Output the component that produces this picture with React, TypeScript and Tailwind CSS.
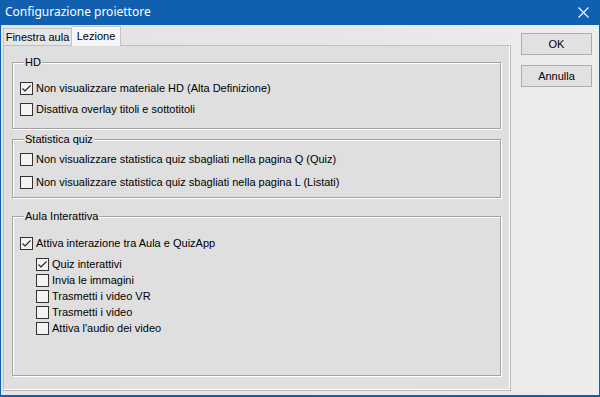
import React from "react";

function Check({ checked }: { checked?: boolean }) {
  return (
    <span className="w-[13px] h-[13px] border border-[#333333] bg-[#f3f3f3] flex items-center justify-center shrink-0">
      {checked && (
        <svg width="11" height="11" viewBox="0 0 11 11">
          <polyline points="1.5,5.5 4,8 9.5,2.5" fill="none" stroke="#222" strokeWidth="1.1" />
        </svg>
      )}
    </span>
  );
}

function Row({ label, checked, className }: { label: string; checked?: boolean; className?: string }) {
  return (
    <div className={"flex items-center gap-[3px] h-[13px] " + (className ?? "")}>
      <Check checked={checked} />
      <span className="leading-[13px] whitespace-nowrap">{label}</span>
    </div>
  );
}

function Group({ title, className, children }: { title: string; className?: string; children: React.ReactNode }) {
  return (
    <fieldset
      className={
        "border border-[#a3a3a3] shadow-[inset_1px_1px_0_#ffffff,1px_1px_0_#ffffff] px-[7px] m-0 min-w-0 " +
        (className ?? "")
      }
    >
      <legend className="relative bg-[#dfdfdf] ml-[4px] px-[1px] leading-[13px]">{title}</legend>
      {children}
    </fieldset>
  );
}

export default function App() {
  return (
    <div className="w-[600px] h-[397px] bg-[#1160b0] flex flex-col text-[11px] text-black font-['Liberation_Sans',Arial,sans-serif]">
      <div className="h-[25px] shrink-0 flex items-center justify-between pl-[5px] pr-[11px] text-white">
        <span className="text-[12px] font-['Noto_Sans',sans-serif] leading-none pb-[1px]">Configurazione proiettore</span>
        <svg width="11" height="11" viewBox="0 0 11 11">
          <path d="M0.5 0.5 L10.5 10.5 M10.5 0.5 L0.5 10.5" stroke="#ffffff" strokeWidth="1.1" />
        </svg>
      </div>
      <div className="flex-1 mx-[1px] mb-[2px] flex bg-gradient-to-r from-[#e4e4e4] via-[#e6e6e6] to-[#ededed]">
        {/* tab control */}
        <div className="w-[510px] pl-[2px] flex flex-col">
          <div className="h-[20px] flex items-end shrink-0">
            <div className="h-[17px] w-[69px] border border-b-0 border-[#c4c4c4] bg-[#e6e6e6] flex items-center justify-center leading-none">
              Finestra aula
            </div>
            <div className="h-[20px] w-[49px] border border-b-0 border-[#c4c4c4] border-l-0 bg-[#f6f6f6] flex items-center justify-center leading-none pb-[1px] relative top-[1px] z-10">
              Lezione
            </div>
          </div>
          <div className="h-[346px] border border-[#c0c0c0] border-r-[#b9b9b9] border-b-[#b9b9b9] shadow-[inset_-1px_-1px_0_#ffffff] bg-[#dfdfdf] pl-[8px] pr-[9px] pt-[10px] flex flex-col">
            <Group title="HD" className="h-[73px] pt-[13px]">
              <Row label="Non visualizzare materiale HD (Alta Definizione)" checked />
              <Row label="Disattiva overlay titoli e sottotitoli" className="mt-[8px]" />
            </Group>
            <Group title="Statistica quiz" className="h-[65px] mt-[4px] pt-[7px]">
              <Row label="Non visualizzare statistica quiz sbagliati nella pagina Q (Quiz)" />
              <Row label="Non visualizzare statistica quiz sbagliati nella pagina L (Listati)" className="mt-[10px]" />
            </Group>
            <Group title="Aula Interattiva" className="h-[166px] mt-[12px] pt-[14px]">
              <Row label="Attiva interazione tra Aula e QuizApp" checked />
              <div className="pl-[16px] mt-[8px] flex flex-col gap-[3px]">
                <Row label="Quiz interattivi" checked />
                <Row label="Invia le immagini" />
                <Row label="Trasmetti i video VR" />
                <Row label="Trasmetti i video" />
                <Row label="Attiva l'audio dei video" />
              </div>
            </Group>
          </div>
        </div>
        {/* buttons */}
        <div className="flex-1 flex flex-col pl-[10px] pt-[8px]">
          <button className="w-[71px] h-[22px] border border-[#adadad] bg-[#e1e1e1] flex items-center justify-center leading-none">
            OK
          </button>
          <button className="w-[71px] h-[22px] mt-[10px] border border-[#adadad] bg-[#e1e1e1] flex items-center justify-center leading-none">
            Annulla
          </button>
        </div>
      </div>
    </div>
  );
}
